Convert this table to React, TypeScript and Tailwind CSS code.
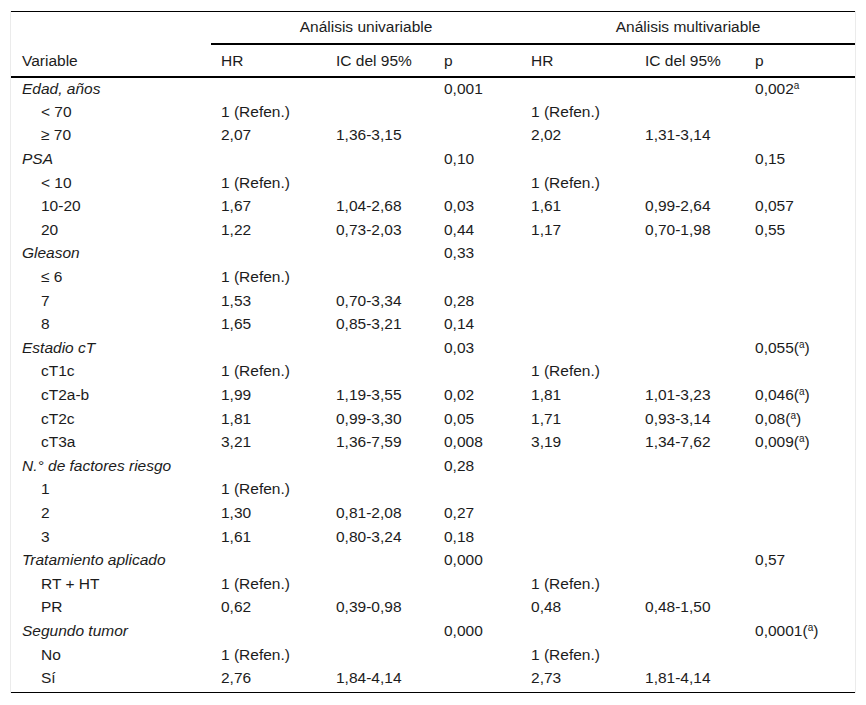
import type { ReactNode } from "react";

type Row = {
  label: string;
  group?: boolean;
  cells: ReactNode[];
};

const Sup = ({ paren }: { paren?: boolean }) =>
  paren ? (
    <>
      (<sup className="text-[10px]">a</sup>)
    </>
  ) : (
    <sup className="text-[10px]">a</sup>
  );

const ref = "1 (Refen.)";

const rows: Row[] = [
  { label: "Edad, años", group: true, cells: ["", "", "0,001", "", "", <>0,002<Sup /></>] },
  { label: "< 70", cells: [ref, "", "", ref, "", ""] },
  { label: "≥ 70", cells: ["2,07", "1,36-3,15", "", "2,02", "1,31-3,14", ""] },
  { label: "PSA", group: true, cells: ["", "", "0,10", "", "", "0,15"] },
  { label: "< 10", cells: [ref, "", "", ref, "", ""] },
  { label: "10-20", cells: ["1,67", "1,04-2,68", "0,03", "1,61", "0,99-2,64", "0,057"] },
  { label: "20", cells: ["1,22", "0,73-2,03", "0,44", "1,17", "0,70-1,98", "0,55"] },
  { label: "Gleason", group: true, cells: ["", "", "0,33", "", "", ""] },
  { label: "≤ 6", cells: [ref, "", "", "", "", ""] },
  { label: "7", cells: ["1,53", "0,70-3,34", "0,28", "", "", ""] },
  { label: "8", cells: ["1,65", "0,85-3,21", "0,14", "", "", ""] },
  { label: "Estadio cT", group: true, cells: ["", "", "0,03", "", "", <>0,055<Sup paren /></>] },
  { label: "cT1c", cells: [ref, "", "", ref, "", ""] },
  { label: "cT2a-b", cells: ["1,99", "1,19-3,55", "0,02", "1,81", "1,01-3,23", <>0,046<Sup paren /></>] },
  { label: "cT2c", cells: ["1,81", "0,99-3,30", "0,05", "1,71", "0,93-3,14", <>0,08<Sup paren /></>] },
  { label: "cT3a", cells: ["3,21", "1,36-7,59", "0,008", "3,19", "1,34-7,62", <>0,009<Sup paren /></>] },
  { label: "N.° de factores riesgo", group: true, cells: ["", "", "0,28", "", "", ""] },
  { label: "1", cells: [ref, "", "", "", "", ""] },
  { label: "2", cells: ["1,30", "0,81-2,08", "0,27", "", "", ""] },
  { label: "3", cells: ["1,61", "0,80-3,24", "0,18", "", "", ""] },
  { label: "Tratamiento aplicado", group: true, cells: ["", "", "0,000", "", "", "0,57"] },
  { label: "RT + HT", cells: [ref, "", "", ref, "", ""] },
  { label: "PR", cells: ["0,62", "0,39-0,98", "", "0,48", "0,48-1,50", ""] },
  { label: "Segundo tumor", group: true, cells: ["", "", "0,000", "", "", <>0,0001<Sup paren /></>] },
  { label: "No", cells: [ref, "", "", ref, "", ""] },
  { label: "Sí", cells: ["2,76", "1,84-4,14", "", "2,73", "1,81-4,14", ""] },
];

export default function App() {
  return (
    <div
      className="min-h-[705px] bg-white pt-[11px] text-[15.5px] leading-[22px] text-[#1c1c1c]"
      style={{ fontFamily: '"Liberation Sans", Arial, sans-serif' }}
    >
      <div className="ml-[10px] w-[846px] border-x border-[#ebebeb]">
        <table className="w-[844px] table-fixed border-collapse border-y border-black">
          <colgroup>
            <col className="w-[200px]" />
            <col className="w-[115px]" />
            <col className="w-[108px]" />
            <col className="w-[87px]" />
            <col className="w-[114px]" />
            <col className="w-[110px]" />
            <col className="w-[110px]" />
          </colgroup>
          <thead>
            <tr className="h-[32px]">
              <th />
              <th colSpan={3} className="border-b-2 border-black text-center font-normal">
                Análisis univariable
              </th>
              <th colSpan={3} className="border-b-2 border-black text-center font-normal">
                Análisis multivariable
              </th>
            </tr>
            <tr className="h-[33px] border-b-2 border-black">
              <th className="pl-[11px] pt-[2px] text-left font-normal">Variable</th>
              {["HR", "IC del 95%", "p", "HR", "IC del 95%", "p"].map((h, i) => (
                <th key={i} className="pl-[10px] pt-[2px] text-left font-normal">
                  {h}
                </th>
              ))}
            </tr>
          </thead>
          <tbody>
            {rows.map((r, i) => (
              <tr key={i} className="h-[23.6px]">
                <td className={r.group ? "pl-[11px] italic" : "pl-[30px]"}>{r.label}</td>
                {r.cells.map((c, j) => (
                  <td key={j} className="pl-[10px] whitespace-nowrap">
                    {c}
                  </td>
                ))}
              </tr>
            ))}
            <tr className="h-[3px]">
              <td colSpan={7} />
            </tr>
          </tbody>
        </table>
      </div>
    </div>
  );
}
